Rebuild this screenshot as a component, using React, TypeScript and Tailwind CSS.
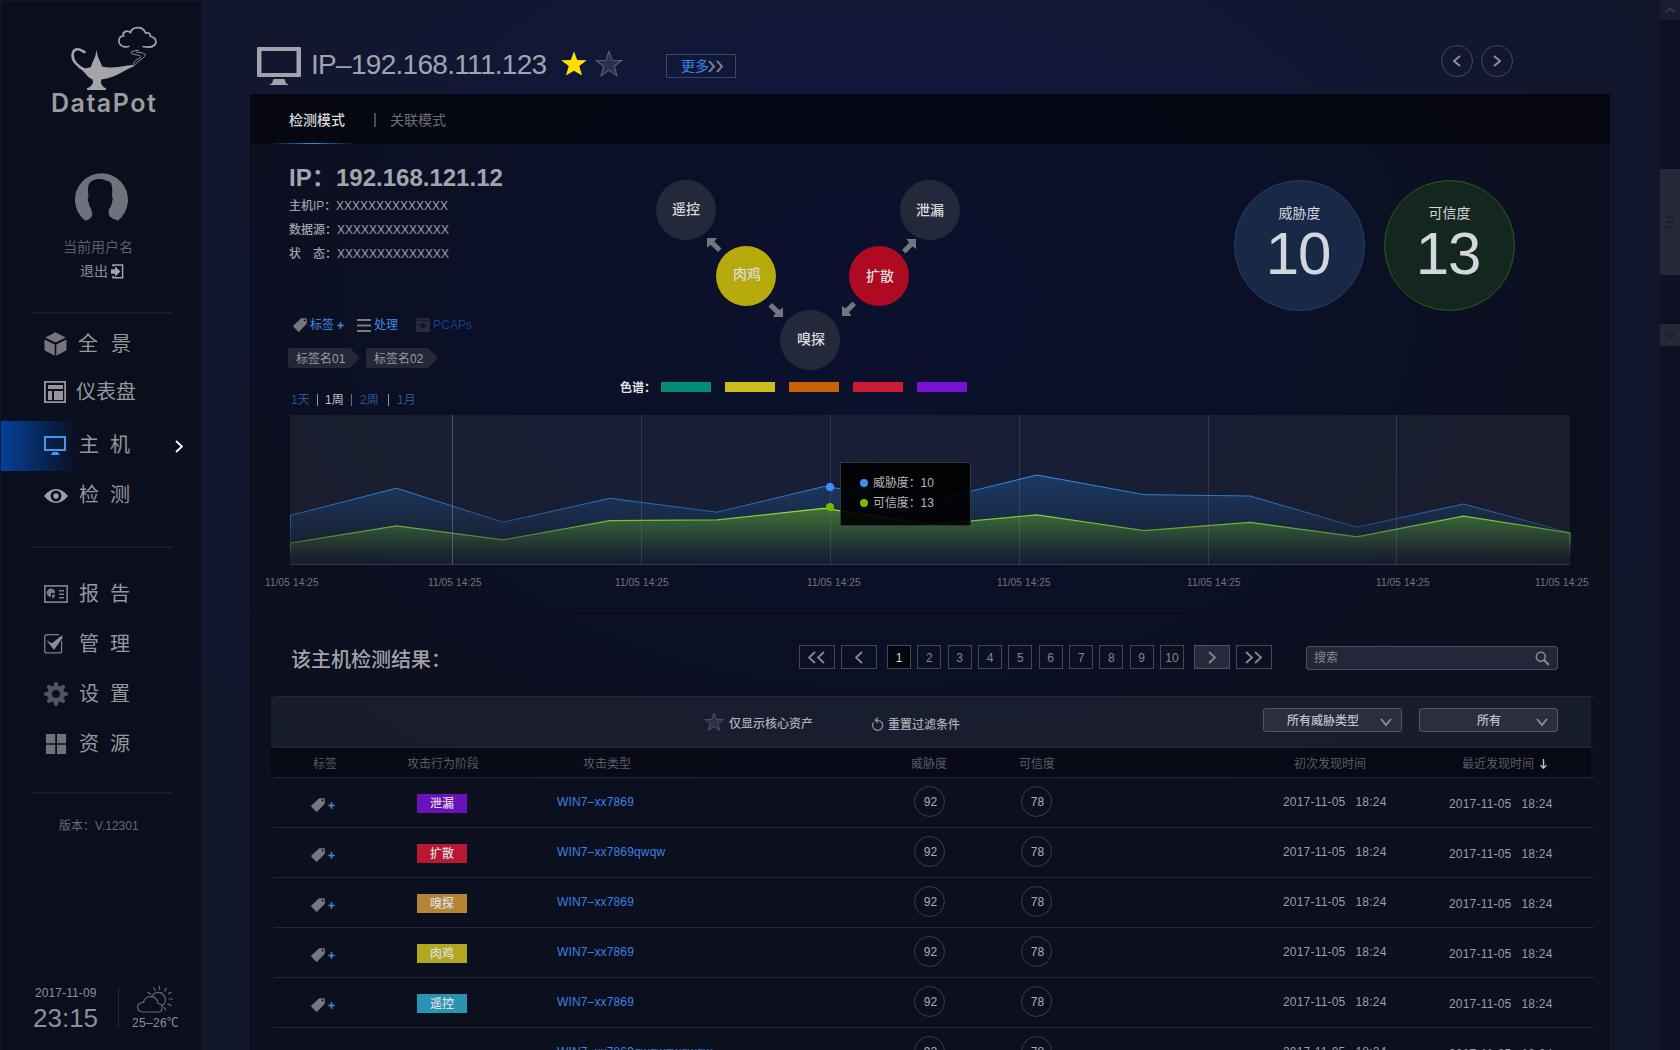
import React from "react";

/* ---------- shared drawings ---------- */

type ChevronProps = { dir: "left" | "right" | "down"; double?: boolean; className?: string; w?: number; h?: number };

function Chevron({ dir, double = false, className = "", w = 8, h = 14 }: ChevronProps) {
  const width = double ? w * 2 + 2 : w;
  const single = (x: number) =>
    dir === "left"
      ? `M${x + w - 1} 1L${x + 1} ${h / 2}L${x + w - 1} ${h - 1}`
      : dir === "right"
        ? `M${x + 1} 1L${x + w - 1} ${h / 2}L${x + 1} ${h - 1}`
        : `M${x + 1} 1L${x + w / 2} ${h - 1}L${x + w - 1} 1`;
  return (
    <svg width={width} height={h} viewBox={`0 0 ${width} ${h}`} fill="none" stroke="currentColor" strokeWidth="1.9" className={className}>
      <path d={single(0) + (double ? single(w + 1) : "")} />
    </svg>
  );
}

function Plus({ className = "" }: { className?: string }) {
  return (
    <svg width="7" height="7" viewBox="0 0 7 7" className={className} fill="none" stroke="#4388d8" strokeWidth="1.7">
      <path d="M3.500 .3V6.700M.3 3.500H6.700" />
    </svg>
  );
}

function TagIcon() {
  return (
    <svg width="14" height="14" viewBox="0 0 14 14" fill="#76777d">
      <path fillRule="evenodd" d="M8.2 .3L13 .2Q13.9 .2 13.9 1L13.8 5.8L6.3 13.5Q5.7 14 5.1 13.5L.4 8.8Q-.1 8.2 .4 7.6ZM11.7 1.6A1 1 0 1 0 11.7 3.6A1 1 0 1 0 11.7 1.6Z" />
    </svg>
  );
}

function StarOutline({ size, className = "" }: { size: number; className?: string }) {
  return (
    <svg width={size} height={size} viewBox="0 0 28 28" className={className} fill="#2c304a" stroke="#5a5d6c" strokeWidth="1.100">
      <path d="M14 1.500L17.200 10.200L26.800 10.500L19.300 16.200L22 25.800L14 20.400L6 25.800L8.700 16.200L1.200 10.500L10.800 10.200Z" />
    </svg>
  );
}

/* ---------- sidebar ---------- */

function LampLogo() {
  return (
    <svg width="200" height="91" viewBox="1 1 200 91" fill="none" stroke="#a5a5a8">
      <path strokeWidth="1.7" d="M129.500 46.300C123 48.500 118 44.500 119 39.500Q120 36 123.500 36C122 32 127 29.500 130.500 32.500C132 26.500 143 25.500 145.500 33Q150.500 32 150.500 36.500C156 37 157.500 43 154 45.500Q151 48.200 142.500 46.500" />
      <path strokeWidth="1" stroke="#8d8e92" d="M133.500 66C133.500 61 136 60 139 58.500Q142.500 57 139.500 55.500L132.500 54Q129 52 134 51L139 50.200M135 65C137 61 142 60 144.500 56.500Q147 53.500 141.500 52.800L136 52" />
      <path strokeWidth="2.600" strokeLinecap="round" d="M84.500 52C82 51 80.500 49 77 49.300C71 50.500 71.500 58.500 76 63.500C79 67 82.500 69 86 70.500" />
      <path fill="#a5a5a8" stroke="none" d="M96.500 50Q97.300 57 100 61.500Q101.500 64.500 102 66.500C112 69.500 122 65.500 133.500 65V66.800C125 69 117 77.500 101.500 79.500Q99 85 106 88.300V90H87V88.300Q95 85 92.500 79.500C87 77.500 85.500 71.500 78 67.500Q84 69.500 91 67Q91.500 64 93 61.500Q95.700 57 96.500 50Z" />
    </svg>
  );
}

function Avatar() {
  return (
    <svg width="54" height="48" viewBox="75 173 54 48">
      <path
        fill="#6f717b"
        d="M85 220.500A26.500 26.500 0 1 1 118 220.500Q113.500 220 109.800 216.500Q108 214.500 109 209Q111.500 207 112 202Q113.500 198.500 112 196Q113 188 111 183Q109.500 181 106 180.500C99 177.500 91 179.500 88.500 185Q87.500 190 88.500 196Q87 199 88.500 202Q89 206 91 208.500Q92 213 92.500 214.500Q91 220 85 220.500Z"
      />
    </svg>
  );
}

const menuIcons: Record<string, React.ReactNode> = {
  cube: (
    <svg width="24" height="24" viewBox="0 0 24 24" fill="#74757d">
      <path d="M11.500 .3L21.800 5.500L11.500 10.500L1.200 5.500Z M.5 7.500L10.700 12.500V23.700L.5 18.300Z M22.500 7.500L12.300 12.500V23.700L22.500 18.300Z" />
    </svg>
  ),
  board: (
    <svg width="24" height="22" viewBox="0 0 24 22" fill="#96979c">
      <path fillRule="evenodd" d="M0 0H22V22H0ZM1.800 1.800V20.200H20.200V1.800Z" />
      <path d="M4 4H19V8H4ZM4 10H8V19H4ZM10 10H19V19H10Z" />
    </svg>
  ),
  screen: (
    <svg width="24" height="20" viewBox="0 0 24 20" fill="#4a94ea">
      <path fillRule="evenodd" d="M0 0H22V15H0ZM2 2V13H20V2Z" />
      <path d="M9 16H13.500L16 19H6.500Z" />
    </svg>
  ),
  eye: (
    <svg width="24" height="14" viewBox="0 0 24 14" fill="#a0a0a4">
      <path fillRule="evenodd" d="M0 7Q5.500 0 12 0Q18.500 0 24 7Q18.500 14 12 14Q5.500 14 0 7ZM12 1.500A5.500 5.500 0 1 0 12 12.500A5.500 5.500 0 1 0 12 1.500Z" />
      <circle cx="12" cy="7" r="2.700" />
    </svg>
  ),
  report: (
    <svg width="24" height="18" viewBox="0 0 24 18" fill="#7c7d84">
      <path fillRule="evenodd" d="M0 0H24V18H0ZM1.700 1.700V16.300H22.300V1.700Z" />
      <path d="M7 3.500A4.200 4.200 0 1 0 7 12L7 8H11A4.300 4.300 0 0 0 7 3.500ZM8.200 9.500H11Q11 12.500 8.200 13.500Z" />
      <path d="M15 5H20V6.400H15ZM15 8.500H20V9.900H15ZM15 12H20V13.400H15Z" />
    </svg>
  ),
  check: (
    <svg width="24" height="20" viewBox="0 0 24 20" fill="none">
      <path stroke="#7c7d84" strokeWidth="1.300" d="M15 .7H3Q.7 .7 .7 3V17Q.7 18.900 3 18.900H15.500Q17.600 18.900 17.600 17V7" />
      <path fill="#8f9096" d="M2.500 6.500L8 9.200L18.300 1V4.200L10 15.800Z" />
    </svg>
  ),
  gear: (
    <svg width="24" height="24" viewBox="0 0 24 24">
      <g fill="#51535e">
        <path fillRule="evenodd" d="M12 3.700A8.300 8.300 0 1 0 12 20.300A8.300 8.300 0 1 0 12 3.700ZM12 8A4 4 0 1 1 12 16A4 4 0 1 1 12 8Z" />
        <path d="M9 5L10.800 0H13.200L15 5ZM9 19L10.800 24H13.200L15 19ZM5 9L0 10.800V13.200L5 15ZM19 9L24 10.800V13.200L19 15ZM4.800 9L2.700 4.400L4.400 2.700L9 4.800ZM19.200 9L21.300 4.400L19.600 2.700L15 4.800ZM4.800 15L2.700 19.600L4.400 21.300L9 19.200ZM19.200 15L21.300 19.600L19.600 21.300L15 19.200Z" />
      </g>
    </svg>
  ),
  grid: (
    <svg width="24" height="20" viewBox="0 0 24 20" fill="#70727c">
      <path d="M2 0H11.200V9.200H2ZM13 0H22V9.200H13ZM2 10.800H11.200V20H2ZM13 10.800H22V20H13Z" />
    </svg>
  ),
};

type MenuItemProps = { icon: string; label: string[]; active?: boolean; spread?: string };

function MenuItem({ icon, label, active = false, spread = "-mt-[2px] gap-[11px]" }: MenuItemProps) {
  return (
    <div className="flex h-[50px] w-full items-center">
      <div className={`flex h-full w-[78px] shrink-0 items-center pl-[43px] ${active ? "bg-linear-to-r from-[#04419a] to-transparent" : ""}`}>
        {menuIcons[icon]}
      </div>
      <div className={`flex text-[20px] leading-[20px] text-[#96979d] ${spread}`}>
        {label.map((c) => (
          <span key={c}>{c}</span>
        ))}
      </div>
      {active && <Chevron dir="right" w={8} h={13} className="mt-px ml-auto mr-[18px] text-white" />}
    </div>
  );
}

function Divider() {
  return <div className="ml-[30px] h-[2px] w-[141px] shrink-0 bg-[#181b29]" />;
}

function Weather() {
  return (
    <svg width="38" height="28" viewBox="136 985 38 28" fill="none" stroke="#666873" strokeWidth="1.200">
      <path d="M143 1012C135.500 1012 136 1002 143.500 1002.500C145 994.500 157 994.500 158 1003.500C163.500 1003.500 163.500 1012 158 1012Z" />
      <path d="M152 996.500C154.500 991.500 161 991 164 995.500C167 1000 165 1004.500 161.500 1006M159.500 985.500V990M153.500 987.500L155.500 991M147.500 992L151 994.500M166.500 988L164.500 991.500M171.500 992L168 994M168.500 999H173M167.500 1003.500L171.500 1006M164 1007L166 1010.500" />
    </svg>
  );
}

function Sidebar() {
  return (
    <aside className="mt-px ml-px flex h-[1049px] w-[200px] shrink-0 flex-col bg-[#0b0e1c]">
      <LampLogo />
      <div className="ml-[50px] h-[22px] text-[25px] leading-[22px] font-semibold tracking-[1.500px] text-[#9b9ca0] [font-family:Inter,sans-serif]">DataPot</div>
      <div className="mt-[59px] ml-[74px] h-[48px]">
        <Avatar />
      </div>
      <div className="mt-[19px] ml-[62px] h-[14px] text-[14px] leading-[14px] text-[#5d5f6a]">当前用户名</div>
      <div className="mt-[9px] ml-[79px] flex h-[16px] items-center gap-[3px] text-[14px] leading-[14px] text-[#8e8f96]">
        退出
        <svg width="13" height="15" viewBox="0 0 13 15" fill="none" stroke="#a2a3a8" strokeWidth="1.500">
          <path d="M2 2.500V1H11.600V13.800H2V12" />
          <path fill="#a2a3a8" stroke="none" d="M0 5.300H4V2.300L9.500 7.500L4 12.700V9.700H0Z" />
        </svg>
      </div>
      <div className="h-[33px] shrink-0" />
      <Divider />
      <nav className="flex flex-col">
        <div className="mt-[5px]">
          <MenuItem icon="cube" label={["全", "景"]} spread="gap-[13px] -ml-px" />
        </div>
        <div className="-mt-[2px]">
          <MenuItem icon="board" label={["仪表盘"]} spread="-ml-[3px]" />
        </div>
        <div className="mt-[4px]">
          <MenuItem icon="screen" label={["主", "机"]} active />
        </div>
        <MenuItem icon="eye" label={["检", "测"]} />
      </nav>
      <div className="h-[25px] shrink-0" />
      <Divider />
      <nav className="mt-[21px] flex flex-col">
        <MenuItem icon="report" label={["报", "告"]} spread="gap-[11px]" />
        <MenuItem icon="check" label={["管", "理"]} spread="gap-[11px]" />
        <MenuItem icon="gear" label={["设", "置"]} spread="gap-[11px]" />
        <MenuItem icon="grid" label={["资", "源"]} spread="gap-[11px]" />
      </nav>
      <div className="h-[23px] shrink-0" />
      <Divider />
      <div className="mt-[26px] ml-[58px] h-[12px] text-[12px] leading-[12px] text-[#676974]">版本：V.12301</div>
      <div className="mt-auto mb-[20px] flex h-[44px] text-[#8f9096]">
        <div className="ml-[32px] w-[85px]">
          <div className="ml-[2px] text-[12px] leading-[14px] tracking-[.1px]">2017-11-09</div>
          <div className="mt-[5px] text-[26px] leading-[26px]">23:15</div>
        </div>
        <div className="mt-px h-[41px] w-px bg-[#252836]" />
        <div className="-mt-px ml-[13px]">
          <div className="ml-[4px]">
            <Weather />
          </div>
          <div className="mt-[3px] text-[12px] leading-[14px] tracking-[.3px]">25–26℃</div>
        </div>
      </div>
    </aside>
  );
}

/* ---------- header ---------- */

function Header() {
  return (
    <header className="flex h-[93px] items-start">
      <svg width="44" height="38" viewBox="0 0 44 38" fill="#a1a3ae" className="mt-[47px] ml-[7px]">
        <path fillRule="evenodd" d="M1 0H43Q44 0 44 1V29Q44 30 43 30H1Q0 30 0 29V1Q0 0 1 0ZM4.500 4V26H39.500V4Z" />
        <path d="M16.500 32H27.500L29 36.500Q31.500 36.500 31.500 38H12.500Q12.500 36.500 15 36.500Z" />
      </svg>
      <h1 className="mt-[51px] ml-[10px] w-[250px] text-[28px] leading-[28px] tracking-[-.7px] text-[#a1a3ae]">IP–192.168.111.123</h1>
      <svg width="26" height="25" viewBox="1 1.500 26 24.500" fill="#ffe000" className="mt-[51px]">
        <path d="M14 1.500L17.200 10.200L26.800 10.500L19.300 16.200L22 25.800L14 20.900L6 25.800L8.700 16.200L1.200 10.500L10.800 10.200Z" />
      </svg>
      <StarOutline size={28} className="mt-[50px] ml-[8px]" />
      <button className="mt-[54px] ml-[43px] flex h-[24px] w-[70px] items-center border border-[#414559] pl-[14px] text-[14px] leading-[14px] text-[#3a86e4]">
        更多
        <Chevron dir="right" double w={7} h={13} className="-ml-px text-[#7b7e8c]" />
      </button>
      <div className="mt-[45px] ml-[705px] flex gap-[8px] text-[#8c8e99]">
        <button className="flex h-[32px] w-[32px] items-center justify-center rounded-full border border-[#454859]">
          <Chevron dir="left" w={8} h={12} />
        </button>
        <button className="flex h-[32px] w-[32px] items-center justify-center rounded-full border border-[#454859]">
          <Chevron dir="right" w={8} h={12} />
        </button>
      </div>
    </header>
  );
}

function ModeTabs() {
  return (
    <div className="flex h-[50px] flex-col bg-black/65">
      <div className="flex h-[50px] items-center pt-px text-[14px] leading-[14px]">
        <span className="ml-[39px] w-[85px] font-medium text-[#d8d9dc]">检测模式</span>
        <span className="h-[14px] w-[2px] bg-[#4a4c56]" />
        <span className="ml-[14px] text-[#6c6e77]">关联模式</span>
      </div>
      <div className="-mt-px ml-[20px] h-px w-[85px] shrink-0 bg-linear-to-r from-transparent via-[#2a90f5] to-transparent" />
    </div>
  );
}

/* ---------- host summary ---------- */

function TagChip({ label }: { label: string }) {
  return (
    <div className="flex h-[20px] w-[72px] items-center rounded-l-[3px] bg-[#242738] pt-px pl-[8px] text-[12px] leading-[12px] text-[#9a9ba3] [clip-path:polygon(0_0,62px_0,72px_50%,62px_100%,0_100%)]">
      {label}
    </div>
  );
}

function HostInfo() {
  return (
    <div className="flex w-[360px] flex-col pl-[39px] whitespace-nowrap">
      <div className="mt-[21px] flex h-[24px] text-[24px] leading-[24px] font-bold text-[#a3a5ab]">
        <span className="w-[47px]">IP：</span>
        <span>192.168.121.12</span>
      </div>
      <div className="mt-[4px] flex flex-col text-[12px] leading-[24px] font-medium text-[#a0a2a9]">
        <div className="flex h-[24px]">
          <span className="w-[47px]">主机IP：</span>
          <span className="font-normal">XXXXXXXXXXXXXX</span>
        </div>
        <div className="flex h-[24px]">
          <span className="w-[48px]">数据源：</span>
          <span className="font-normal">XXXXXXXXXXXXXX</span>
        </div>
        <div className="flex h-[24px]">
          <span className="w-[24px]">状</span>
          <span className="w-[24px]">态：</span>
          <span className="font-normal">XXXXXXXXXXXXXX</span>
        </div>
      </div>
      <div className="mt-[51px] ml-[4px] flex h-[16px] items-center text-[12px] leading-[12px] text-[#3f8ae6]">
        <TagIcon />
        <span className="ml-[3px]">标签</span>
        <Plus className="ml-[3px]" />
        <svg width="14" height="13" viewBox="0 0 14 13" className="ml-[13px]" fill="#7a7b83">
          <path d="M0 0H14V2H0ZM0 5.500H14V7.500H0ZM0 11H14V13H0Z" />
        </svg>
        <span className="ml-[3px]">处理</span>
        <svg width="14" height="15" viewBox="0 0 14 15" className="ml-[18px]">
          <path fill="#262a3a" d="M1 0H13L14 3V14H0V3Z" />
          <path fill="#101427" d="M5.500 5H8.500V7H11L7 11L3 7H5.500ZM1 2H13V2.800H1Z" />
        </svg>
        <span className="ml-[3px] text-[12px] tracking-[.1px] text-[#11418a]">PCAPs</span>
      </div>
      <div className="mt-[15px] -ml-px flex gap-[6px]">
        <TagChip label="标签名01" />
        <TagChip label="标签名02" />
      </div>
      <div className="mt-[25px] ml-[2px] flex h-[14px] items-center text-[12px] leading-[12px] text-[#245695]">
        <span className="w-[26px]">1天</span>
        <i className="h-[12px] w-px bg-[#90929a]" />
        <span className="ml-[7px] w-[26px] text-[#c0c1c5]">1周</span>
        <i className="h-[12px] w-px bg-[#6a6c76]" />
        <span className="ml-[8px] w-[28px]">2周</span>
        <i className="h-[12px] w-px bg-[#90929a]" />
        <span className="ml-[8px]">1月</span>
      </div>
    </div>
  );
}

const nodes = [
  { label: "遥控", x: 686, y: 210, fill: "bg-[#24283b]", shift: "pb-[2px]" },
  { label: "泄漏", x: 930, y: 210, fill: "bg-[#24283b]", shift: "" },
  { label: "肉鸡", x: 746, y: 276, fill: "bg-[#b7aa0d]", shift: "pb-[4px] pl-[2px]" },
  { label: "扩散", x: 879, y: 276, fill: "bg-[#ae0a22]", shift: "pl-[2px]" },
  { label: "嗅探", x: 810, y: 340, fill: "bg-[#24283b]", shift: "pb-[3px] pl-[2px]" },
];

const arrows = [
  { x: 707, y: 238, r: 0 },
  { x: 916, y: 239, r: 90 },
  { x: 783, y: 317, r: 180 },
  { x: 842, y: 316, r: 270 },
];

const spectrum = ["bg-[#038c75]", "bg-[#c9bd20]", "bg-[#c86207]", "bg-[#cb1c35]", "bg-[#7713d0]"];

/* Attack-stage diagram: node coordinates live on a canvas whose origin is (610, 145). */
function StageDiagram() {
  return (
    <div className="flex w-[500px] flex-col">
      <div className="relative h-[232px]">
        <svg width="500" height="232" viewBox="610 145 500 232" fill="#73757f" className="absolute inset-0">
          {arrows.map((a) => (
            <path key={a.r} transform={`translate(${a.x} ${a.y}) rotate(${a.r})`} d="M0 0H10L7.500 3.500L14.500 10.500L11 14L3.700 7L0 9.500Z" />
          ))}
        </svg>
        {nodes.map((n) => (
          <div
            key={n.label}
            className={`absolute flex h-[60px] w-[60px] items-center justify-center rounded-full text-[14px] leading-[14px] font-medium text-[#dcdcdf] ${n.fill} ${n.shift}`}
            style={{ left: n.x - 30 - 610, top: n.y - 30 - 145 }}
          >
            {n.label}
          </div>
        ))}
      </div>
      <div className="ml-[10px] flex h-[20px] items-center">
        <span className="mt-px w-[41px] text-[12px] leading-[12px] font-bold whitespace-nowrap text-[#e0e1e4]">色谱：</span>
        <div className="flex gap-[14px]">
          {spectrum.map((c) => (
            <div key={c} className={`h-[10px] w-[50px] ${c}`} />
          ))}
        </div>
      </div>
    </div>
  );
}

function Score({ label, value, look }: { label: string; value: number; look: string }) {
  return (
    <div className={`flex h-[131px] w-[131px] flex-col items-center rounded-full border ${look}`}>
      <span className="mt-[25px] text-[14px] leading-[14px] text-[#d3d6dc]">{label}</span>
      <span className="mt-[4px] -ml-[3px] text-[60px] leading-[60px] tracking-[-1px] text-[#d3d6dc]">{value}</span>
    </div>
  );
}

/* ---------- trend chart ---------- */

const xs = [290, 396.6, 503, 610, 717, 824, 931, 1037, 1144, 1250, 1357, 1463.5, 1570];
const threat = [515.500, 488.200, 522.200, 498.300, 512.200, 486.500, 501, 475, 494.600, 496, 527.200, 504, 532.700];
const trust = [543.200, 525.900, 539.900, 520.700, 519.900, 508.300, 524.700, 514.800, 530.600, 522.300, 536.900, 516.100, 532.900];
const line = (ys: number[]) => xs.map((x, i) => `${i ? "L" : "M"}${x} ${ys[i]}`).join("");
const area = (ys: number[]) => `${line(ys)}L1570 565L290 565Z`;
const labelGaps = ["ml-[15px]", "ml-[109px]", "ml-[133px]", "ml-[138px]", "ml-[136px]", "ml-[136px]", "ml-[135px]", "ml-[105px]"];

function TrendChart() {
  return (
    <div className="flex flex-col">
      <div className="relative ml-[40px] h-[150px] w-[1280px]">
        <svg width="1281" height="150" viewBox="290 415 1281 150" fill="none">
          <defs>
            <linearGradient id="blueFill" gradientUnits="userSpaceOnUse" x1="0" y1="474" x2="0" y2="550">
              <stop offset="0" stopColor="#1f5796" stopOpacity=".5" />
              <stop offset="1" stopColor="#1f5796" stopOpacity="0" />
            </linearGradient>
            <linearGradient id="greenFill" gradientUnits="userSpaceOnUse" x1="0" y1="508" x2="0" y2="561">
              <stop offset="0" stopColor="#47802a" stopOpacity=".85" />
              <stop offset="1" stopColor="#3b6a30" stopOpacity="0" />
            </linearGradient>
            <linearGradient id="blueLine" gradientUnits="userSpaceOnUse" x1="0" y1="474" x2="0" y2="560">
              <stop offset="0" stopColor="#3a92f5" />
              <stop offset=".55" stopColor="#24558f" />
              <stop offset="1" stopColor="#1c2f50" stopOpacity="0" />
            </linearGradient>
            <linearGradient id="greenLine" gradientUnits="userSpaceOnUse" x1="0" y1="508" x2="0" y2="558">
              <stop offset="0" stopColor="#9be04a" />
              <stop offset=".6" stopColor="#4c8a30" />
              <stop offset="1" stopColor="#2c5a38" stopOpacity="0" />
            </linearGradient>
          </defs>
          <path fill="#f4ffff" fillOpacity=".06" d="M290 415H1570V565H290Z" />
          <path fill="url(#blueFill)" d={area(threat)} />
          <path stroke="url(#blueLine)" d={`M290.500 560V515${line(threat).replace("M", "L")}`} />
          <path fill="url(#greenFill)" d={area(trust)} />
          <path stroke="url(#greenLine)" strokeWidth="1.200" d={`M290.500 560V543${line(trust).replace("M", "L")}V560`} />
          <path stroke="#8c93a8" strokeOpacity=".22" d="M641.500 415V565M830.500 415V565M1019.500 415V565M1208.500 415V565M1396.500 415V565M290 564.500H1570" />
          <path stroke="#9aa0b4" strokeOpacity=".4" d="M452.500 415V565" />
          <circle cx="830" cy="487" r="4" fill="#3a90ff" />
          <circle cx="830" cy="507" r="4" fill="#76bc00" />
        </svg>
        <div className="absolute top-[47px] left-[550px] flex h-[64px] w-[131px] flex-col gap-[6px] border border-[#343538] bg-black/90 pt-[13px] pl-[19px] text-[12px] leading-[14px] tracking-[-.1px] text-[#b4b5b8]">
          <div className="flex items-center gap-[5px]">
            <i className="h-[8px] w-[8px] rounded-full bg-[#3a90ff]" />
            威胁度：10
          </div>
          <div className="flex items-center gap-[5px]">
            <i className="h-[8px] w-[8px] rounded-full bg-[#76bc00]" />
            可信度：13
          </div>
        </div>
      </div>
      <div className="mt-[12px] flex text-[10px] leading-[12px] tracking-[.15px] text-[#72747f]">
        {labelGaps.map((gap, i) => (
          <span key={i} className={`w-[54px] shrink-0 whitespace-nowrap ${gap}`}>
            11/05 14:25
          </span>
        ))}
      </div>
    </div>
  );
}

/* ---------- results ---------- */

const pages = [1, 2, 3, 4, 5, 6, 7, 8, 9, 10];

function Pager() {
  const wide = "flex h-[24px] w-[36px] items-center justify-center border border-[#444757]";
  return (
    <div className="flex h-[24px] text-[12px] leading-[12px] text-[#85878f]">
      <button className={wide}>
        <Chevron dir="left" double w={8} h={13} />
      </button>
      <button className={`${wide} ml-[6px]`}>
        <Chevron dir="left" w={8} h={13} />
      </button>
      <div className="ml-[10px] flex w-[297px] justify-between">
        {pages.map((p) => (
          <button
            key={p}
            className={`flex h-[24px] w-[24px] items-center justify-center border border-[#444757] pt-px ${p === 1 ? "bg-black/60 text-[#d5d6d9]" : ""}`}
          >
            {p}
          </button>
        ))}
      </div>
      <button className="ml-[10px] flex h-[24px] w-[36px] items-center justify-center border border-[#505364] bg-[#262a3c]">
        <Chevron dir="right" w={8} h={13} />
      </button>
      <button className={`${wide} ml-[6px]`}>
        <Chevron dir="right" double w={8} h={13} />
      </button>
    </div>
  );
}

function Dropdown({ label, pad, className = "" }: { label: string; pad: string; className?: string }) {
  return (
    <div className={`flex h-[24px] w-[139px] items-center rounded-[3px] border border-[#515463] bg-[#2b2e3f] text-[12px] leading-[12px] text-[#c0c1c6] ${className}`}>
      <span className={`mt-px w-[116px] ${pad}`}>{label}</span>
      <Chevron dir="down" w={12} h={8} className="mt-[3px] text-[#8b8d97]" />
    </div>
  );
}

const cols = "grid grid-cols-[106px_140px_358px_107px_261px_166px_1fr]";

const rows = [
  { stage: "泄漏", fill: "bg-[#6a11bb]", name: "WIN7–xx7869" },
  { stage: "扩散", fill: "bg-[#b91832]", name: "WIN7–xx7869qwqw" },
  { stage: "嗅探", fill: "bg-[#b58434]", name: "WIN7–xx7869" },
  { stage: "肉鸡", fill: "bg-[#b2a71d]", name: "WIN7–xx7869" },
  { stage: "遥控", fill: "bg-[#2794b2]", name: "WIN7–xx7869" },
  { stage: "", fill: "", name: "WIN7–xx7869qwqwqwqwqw" },
];

function Ring({ value }: { value: number }) {
  return (
    <span className="mt-[8px] -ml-px flex h-[31px] w-[31px] items-center justify-center rounded-full border border-[#393c4b] pl-[2px] text-[12px] leading-[12px] font-medium text-[#adaeb4]">
      {value}
    </span>
  );
}

function Stamp({ className }: { className: string }) {
  return (
    <span className={`flex gap-[10px] tracking-[.2px] whitespace-nowrap ${className}`}>
      <span>2017-11-05</span>
      <span>18:24</span>
    </span>
  );
}

function Results() {
  return (
    <section className="flex flex-col border-t border-[#060813]">
      <div className="flex h-[82px] items-start">
        <h2 className="mt-[36px] ml-[41px] w-[508px] text-[20px] leading-[20px] font-medium text-[#a2a3a8]">该主机检测结果：</h2>
        <div className="mt-[31px]">
          <Pager />
        </div>
        <div className="mt-[32px] ml-[34px] flex h-[24px] w-[252px] items-center rounded-[3px] border border-[#4b4e5f] bg-[#24273a] pl-[7px] text-[12px] leading-[12px] text-[#83858f]">
          搜索
          <svg width="15" height="15" viewBox="0 0 15 15" fill="none" stroke="#8b8d97" strokeWidth="1.500" className="mr-[7px] ml-auto">
            <circle cx="5.800" cy="5.800" r="4.500" />
            <path d="M9 9L14 14" strokeWidth="1.900" />
          </svg>
        </div>
      </div>
      <div className="ml-[24px] h-px w-[1320px] bg-[#242734]" />
      <div className="ml-[21px] flex h-[50px] w-[1320px] items-center bg-[#f4ffff]/6 text-[12px] leading-[12px] font-medium text-[#aeafb5]">
        <StarOutline size={20} className="ml-[433px]" />
        <span className="mt-[3px] ml-[5px]">仅显示核心资产</span>
        <svg width="13" height="15" viewBox="0 0 13 15" className="mt-[4px] ml-[59px]" fill="none" stroke="#8b8d96" strokeWidth="1.300">
          <path d="M1.500 5.500A5 5 0 1 0 6 3.300H4" />
          <path d="M6 .5L3.300 3.300L6 6" />
        </svg>
        <span className="mt-[5px] ml-[3px]">重置过滤条件</span>
        <Dropdown label="所有威胁类型" pad="pl-[23px]" className="-mt-[4px] ml-[303px]" />
        <Dropdown label="所有" pad="pl-[57px]" className="-mt-[4px] ml-[17px]" />
      </div>
      <div className="ml-[24px] h-px w-[1320px] bg-[#242734]" />
      <div className="ml-[21px] flex h-[29px] w-[1320px] items-center bg-black/30 pt-[2px] text-[12px] leading-[12px] text-[#595b66]">
        <span className="ml-[42px] w-[94px]">标签</span>
        <span className="w-[176px]">攻击行为阶段</span>
        <span className="w-[328px]">攻击类型</span>
        <span className="w-[108px]">威胁度</span>
        <span className="w-[275px]">可信度</span>
        <span className="w-[168px]">初次发现时间</span>
        <span>最近发现时间</span>
        <svg width="7" height="10" viewBox="0 0 7 10" fill="none" stroke="#c2c3c7" strokeWidth="1.400" className="ml-[6px]">
          <path d="M3.500 0V9M.7 6.300L3.500 9.200L6.300 6.300" />
        </svg>
      </div>
      <div className="ml-[24px] h-px w-[1320px] bg-[#242734]" />
      {rows.map((r, i) => (
        <div key={i} className={`ml-[24px] h-[50px] w-[1320px] border-b border-[#242734] pl-[37px] text-[12px] leading-[14px] text-[#9c9ea5] ${cols}`}>
          <span className="mt-[19px] flex h-[15px] items-center">
            {r.stage && (
              <>
                <TagIcon />
                <Plus className="mt-[2px] ml-[3px]" />
              </>
            )}
          </span>
          <span className={`mt-[16px] flex h-[19px] w-[50px] items-center justify-center text-[12px] leading-[12px] font-medium text-[#dcdce0] ${r.fill}`}>
            {r.stage}
          </span>
          <span className="mt-[17px] tracking-[.15px] whitespace-nowrap text-[#3784e2]">{r.name}</span>
          <Ring value={92} />
          <Ring value={78} />
          <Stamp className="mt-[17px]" />
          <Stamp className="mt-[19px]" />
        </div>
      ))}
    </section>
  );
}

/* ---------- window scrollbar ---------- */

function ScrollRail() {
  return (
    <div className="ml-auto flex h-full w-[20px] flex-col bg-[#0e1023] text-[#343848]">
      <div className="flex h-[20px] items-center justify-center bg-[#1a1d30]">
        <Chevron dir="down" w={10} h={6} className="rotate-180" />
      </div>
      <div className="mt-[149px] flex h-[106px] flex-col items-center justify-center gap-[3px] bg-[#252839]">
        <i className="h-[2px] w-[8px] bg-[#1b1e2f]" />
        <i className="h-[2px] w-[8px] bg-[#1b1e2f]" />
        <i className="h-[2px] w-[8px] bg-[#1b1e2f]" />
      </div>
      <div className="mt-[49px] flex h-[22px] items-center justify-center bg-[#252839] text-[#1b1e2f]">
        <Chevron dir="down" w={10} h={6} />
      </div>
    </div>
  );
}

export default function App() {
  return (
    <div className="flex h-[1050px] w-[1680px] overflow-hidden bg-[#12152b] bg-[radial-gradient(ellipse_900px_650px_at_880px_300px,#101842_0%,#111739_40%,#12162d_80%,#11162b_100%)] [font-family:'Liberation_Sans','Noto_Sans_CJK_SC',sans-serif]">
      <Sidebar />
      <main className="ml-[49px] flex w-[1360px] flex-col">
        <Header />
        <div className="-mb-[200px] mt-px flex flex-1 flex-col">
          <ModeTabs />
          <div className="flex flex-col bg-black/30">
            <div className="flex h-[271px] pt-px">
              <HostInfo />
              <StageDiagram />
              <div className="mt-[35px] ml-[124px] flex gap-[19px]">
                <Score label="威胁度" value={10} look="bg-[#172947] border-[#22406b]" />
                <Score label="可信度" value={13} look="bg-[#14271e] border-[#2c5a1b]" />
              </div>
            </div>
            <TrendChart />
            <div className="h-[24px]" />
            <Results />
          </div>
        </div>
      </main>
      <ScrollRail />
    </div>
  );
}
